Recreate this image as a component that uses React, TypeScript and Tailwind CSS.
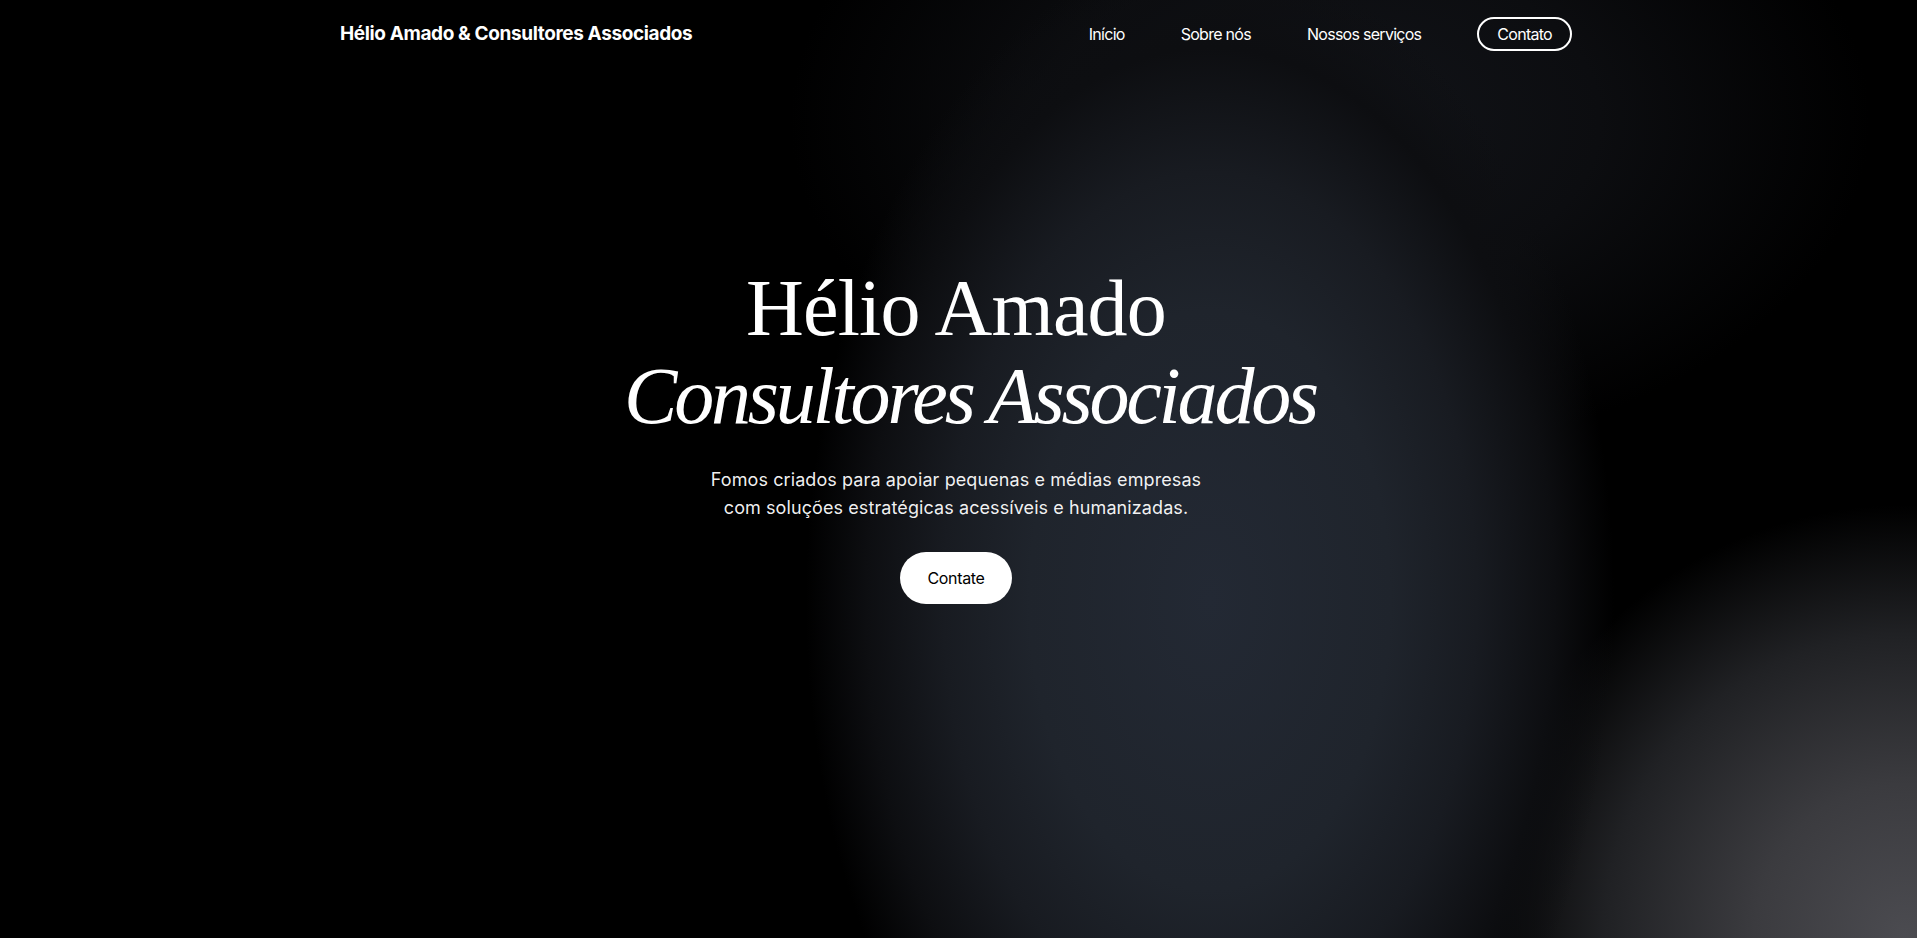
import React from "react";

const links = [
  { label: "Início", href: "#inicio" },
  { label: "Sobre nós", href: "#sobre" },
  { label: "Nossos serviços", href: "#servicos" },
];

export default function App() {
  return (
    <div className="h-screen overflow-y-auto bg-black font-['Inter','Liberation_Sans',sans-serif] text-white [&::-webkit-scrollbar]:w-[5px] [&::-webkit-scrollbar-thumb]:bg-[#5a5a5a] [&::-webkit-scrollbar-track]:bg-white">
      <section
        id="inicio"
        className="relative h-[938px] bg-black pr-[5px] bg-[radial-gradient(ellipse_430px_690px_at_1210px_600px,#232934_0%,#1f242c_42%,#181b21_62%,#0d0e11_80%,rgba(0,0,0,0)_94%),radial-gradient(ellipse_430px_430px_at_1905px_935px,#4b4b50_0%,#3b3b3f_35%,#202124_70%,rgba(0,0,0,0)_100%),radial-gradient(ellipse_540px_340px_at_1330px_120px,#121419_0%,#0c0d10_50%,rgba(0,0,0,0)_100%)]"
      >
        {/* Header */}
        <header className="mx-auto flex h-[68px] max-w-[1232px] items-center justify-between">
          <a href="#inicio" className="text-[19px] font-bold tracking-[-0.02em]">
            Hélio Amado &amp; Consultores Associados
          </a>
          <nav className="flex items-center gap-[56px]">
            {links.map((l) => (
              <a key={l.label} href={l.href} className="text-[16px] tracking-[-0.045em]">
                {l.label}
              </a>
            ))}
            <a
              href="#contato"
              className="flex h-[34px] items-center rounded-full border-2 border-white px-[18px] text-[16px] tracking-[-0.045em]"
            >
              Contato
            </a>
          </nav>
        </header>

        {/* Hero */}
        <div className="flex flex-col items-center pt-[196px] text-center">
          <h1 className="font-['Liberation_Serif',serif] text-[80px] font-normal leading-[88px]">
            <span className="block tracking-[-0.01em]">Hélio Amado</span>
            <span className="block pl-[28px] italic tracking-[-0.04em]">Consultores Associados</span>
          </h1>
          <p className="mt-[26px] text-[18px] leading-[28px] tracking-[0.005em] text-white/95">
            Fomos criados para apoiar pequenas e médias empresas
            <br />
            com soluções estratégicas acessíveis e humanizadas.
          </p>
          <a
            href="#contato"
            className="mt-[30px] flex h-[52px] w-[112px] items-center justify-center rounded-full bg-white text-[16px] tracking-[-0.02em] text-black"
          >
            Contate
          </a>
        </div>
      </section>
      <section id="sobre" className="h-[1600px] bg-black"></section>
      <section id="servicos" className="h-[1600px] bg-black"></section>
      <section id="contato" className="h-[1540px] bg-black"></section>
    </div>
  );
}
